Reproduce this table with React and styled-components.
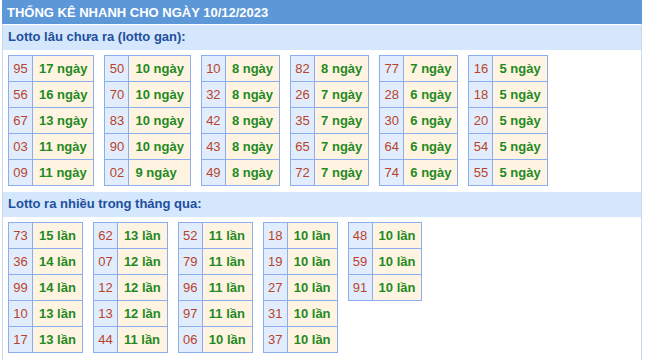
import React from "react";
import styled, { createGlobalStyle } from "styled-components";

const GlobalStyle = createGlobalStyle`
  body {
    margin: 0;
    background: #fff;
    font-family: "Liberation Sans", Arial, sans-serif;
  }
`;

const Box = styled.div`
  margin-left: 2px;
  width: 640px;
  box-sizing: border-box;
  border-left: 1px solid #c9d9ec;
  border-right: 1px solid #c9d9ec;
  min-height: 360px;
`;

const Title = styled.div`
  margin: 0 -1px;
  height: 24px;
  line-height: 25px;
  padding-left: 5px;
  background: #5c97d8;
  color: #fff;
  font-size: 13px;
  font-weight: bold;
`;

const Band = styled.div`
  margin-top: 1px;
  height: 25px;
  line-height: 24px;
  padding-left: 5px;
  background: #d4e7fc;
  color: #1e4f9e;
  font-size: 13px;
  font-weight: bold;
`;

const Tables = styled.div`
  display: flex;
  align-items: flex-start;
  gap: 10px;
  padding: 5px;
`;

const Table = styled.table`
  border-collapse: collapse;
  font-size: 13px;
`;

const Num = styled.td`
  width: 24px;
  height: 25px;
  padding: 0;
  box-sizing: border-box;
  border: 1px solid #8daeee;
  background: #e1edfd;
  color: #b9432a;
  text-align: center;
`;

const Count = styled.td`
  height: 25px;
  padding: 0 6px;
  border: 1px solid #8daeee;
  background: #fff4e2;
  color: #1f8a1f;
  font-weight: bold;
  white-space: nowrap;
`;

const gan = [
  [["95", 17], ["56", 16], ["67", 13], ["03", 11], ["09", 11]],
  [["50", 10], ["70", 10], ["83", 10], ["90", 10], ["02", 9]],
  [["10", 8], ["32", 8], ["42", 8], ["43", 8], ["49", 8]],
  [["82", 8], ["26", 7], ["35", 7], ["65", 7], ["72", 7]],
  [["77", 7], ["28", 6], ["30", 6], ["64", 6], ["74", 6]],
  [["16", 5], ["18", 5], ["20", 5], ["54", 5], ["55", 5]],
];

const nhieu = [
  [["73", 15], ["36", 14], ["99", 14], ["10", 13], ["17", 13]],
  [["62", 13], ["07", 12], ["12", 12], ["13", 12], ["44", 11]],
  [["52", 11], ["79", 11], ["96", 11], ["97", 11], ["06", 10]],
  [["18", 10], ["19", 10], ["27", 10], ["31", 10], ["37", 10]],
  [["48", 10], ["59", 10], ["91", 10]],
];

function Group({ data, unit }) {
  return (
    <Tables>
      {data.map((col, i) => (
        <Table key={i}>
          <tbody>
            {col.map(([n, c]) => (
              <tr key={n}>
                <Num>{n}</Num>
                <Count>
                  {c} {unit}
                </Count>
              </tr>
            ))}
          </tbody>
        </Table>
      ))}
    </Tables>
  );
}

export default function App() {
  return (
    <>
      <GlobalStyle />
      <Box>
        <Title>THỐNG KÊ NHANH CHO NGÀY 10/12/2023</Title>
        <Band>Lotto lâu chưa ra (lotto gan):</Band>
        <Group data={gan} unit="ngày" />
        <Band>Lotto ra nhiều trong tháng qua:</Band>
        <Group data={nhieu} unit="lần" />
      </Box>
    </>
  );
}
